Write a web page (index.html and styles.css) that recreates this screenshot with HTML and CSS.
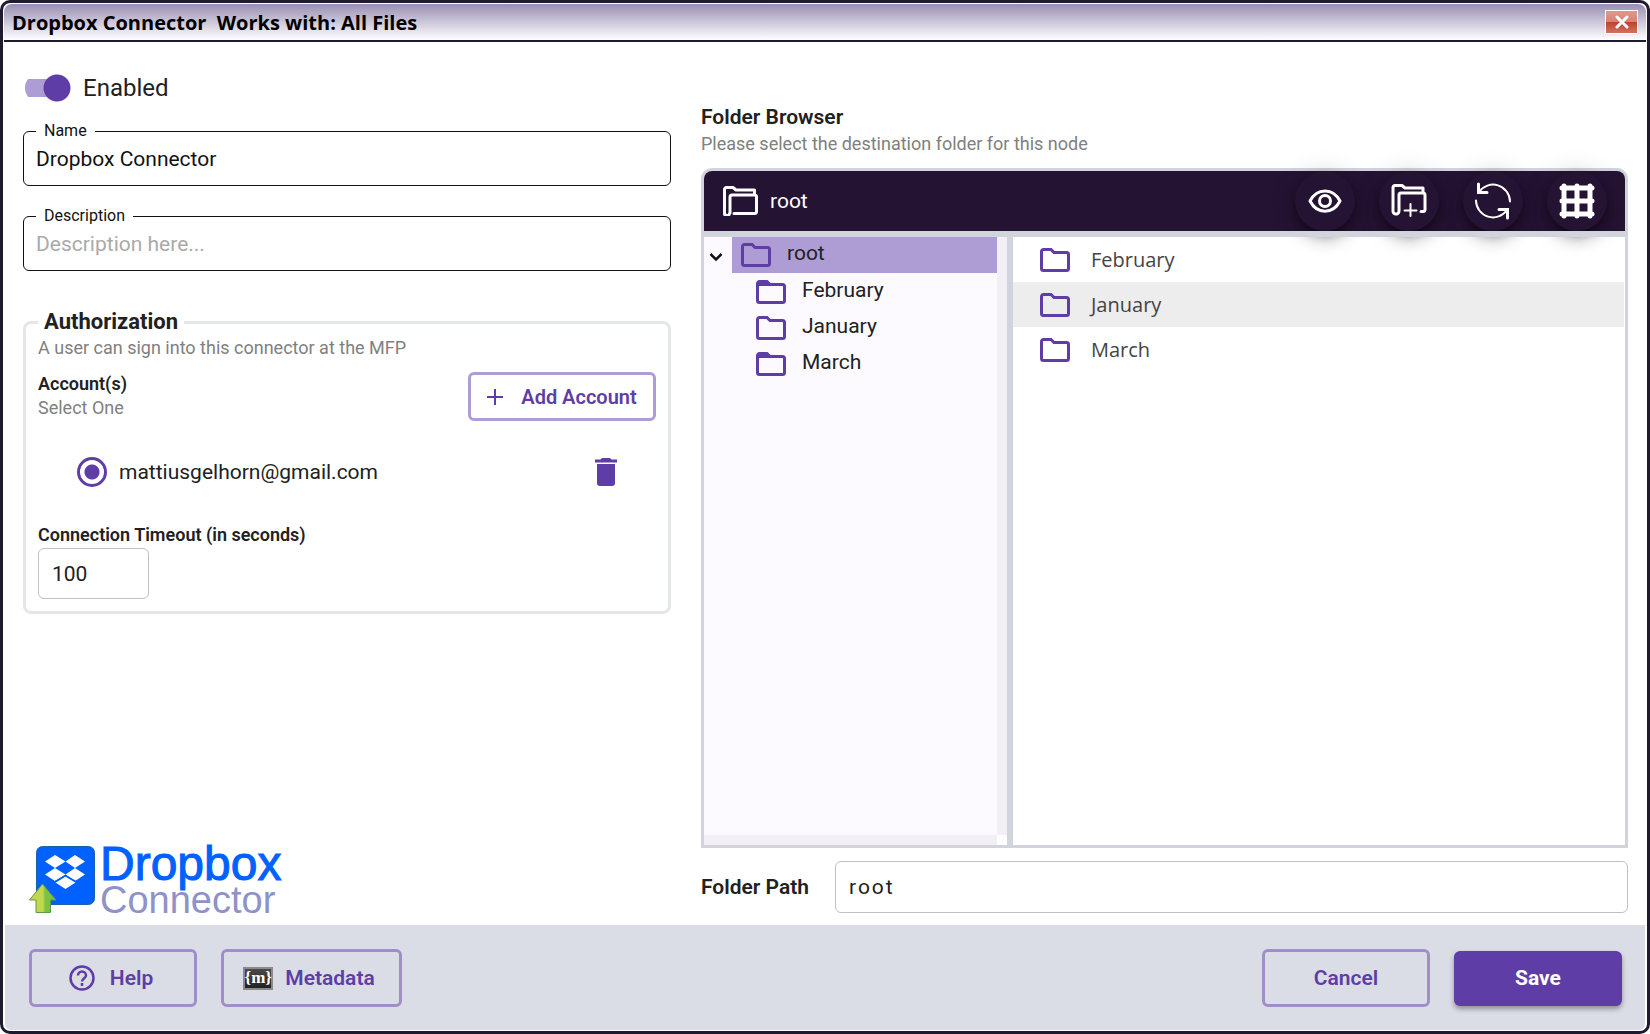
FILE: index.html
```html
<!DOCTYPE html>
<html lang="en">
<head>
<meta charset="utf-8">
<title>Dropbox Connector</title>
<link rel="stylesheet" href="styles.css">
</head>
<body>
<svg class="sprite" aria-hidden="true">
  <symbol id="folder" viewBox="0 0 30 24"><path d="M1.500 20.500V3.500a2 2 0 0 1 2-2h7.500l3 3h12.500a2 2 0 0 1 2 2v14a2 2 0 0 1-2 2h-23a2 2 0 0 1-2-2z" fill="none" stroke="currentColor" stroke-width="3"/></symbol>
  <symbol id="folder-tab" viewBox="0 0 30 24"><path d="M1.500 20.500V3.500a2 2 0 0 1 2-2h7.500l3 3h12.500a2 2 0 0 1 2 2v14a2 2 0 0 1-2 2h-23a2 2 0 0 1-2-2z" fill="none" stroke="currentColor" stroke-width="3"/><path d="M2 1h10l3 5H2z" fill="currentColor"/></symbol>
</svg>
<main class="window">
  <header class="titlebar">
    <h1>Dropbox Connector&nbsp; Works with: All Files</h1>
    <button class="close" type="button" aria-label="Close"><svg width="14" height="14" viewBox="0 0 14 14"><path d="M2 2l10 10M12 2L2 12" stroke="#fff" stroke-width="3" stroke-linecap="round"/></svg></button>
  </header>
  <form class="content">
    <section class="settings">
      <label class="switch"><input type="checkbox" role="switch" checked>Enabled</label>
      <fieldset class="outlined">
        <legend><label for="name">Name</label></legend>
        <input id="name" type="text" value="Dropbox Connector">
      </fieldset>
      <fieldset class="outlined">
        <legend><label for="description">Description</label></legend>
        <input id="description" type="text" placeholder="Description here...">
      </fieldset>
      <fieldset class="auth">
        <legend>Authorization</legend>
        <p class="hint">A user can sign into this connector at the MFP</p>
        <div class="accounts">
          <div>
            <h3>Account(s)</h3>
            <p class="hint">Select One</p>
          </div>
          <button class="button add" type="button"><svg width="16" height="16" viewBox="0 0 16 16"><path d="M8 0v16M0 8h16" stroke="currentColor" stroke-width="2"/></svg>Add Account</button>
        </div>
        <div class="account">
          <label><input type="radio" name="account" checked>mattiusgelhorn@gmail.com</label>
          <button class="trash" type="button" aria-label="Delete account"><svg width="22" height="28" viewBox="0 0 22 28"><path d="M0 1.500h5.500L7 0h8l1.500 1.500H22v3H0zM2 6h18v19a3 3 0 0 1-3 3H5a3 3 0 0 1-3-3z" fill="currentColor"/></svg></button>
        </div>
        <div class="timeout">
          <label for="timeout">Connection Timeout (in seconds)</label>
          <input class="box" id="timeout" type="text" value="100">
        </div>
      </fieldset>
      <div class="logo">
        <svg width="70" height="70" viewBox="0 0 70 70" aria-hidden="true">
          <defs><linearGradient id="leaf"><stop offset="0.500" stop-color="#c0d84e"/><stop offset="0.600" stop-color="#7cc142"/></linearGradient></defs>
          <rect x="8.500" y="2.500" width="58" height="58" rx="6" fill="#0061ff" stroke="#1b62a8"/>
          <path d="M27 11l10.500 6.500L27 24l-10-6.500zM47 11l10 6.500-10 6.500-9.500-6.500zM27 24l10.500 6.500L27 37l-10-6.500zM47 24l10 6.500-10 6.500-9.500-6.500zM37.500 32.500l10 6-10 6.500-10-6.500z" fill="#fff"/>
          <path d="M27.500 37.500l10-6 10 6" fill="none" stroke="#0061ff" stroke-width="1.500"/>
          <path d="M14.500 40L28 56h-5.500v12.500H8V56H1.500z" fill="url(#leaf)" stroke="#5c9a48"/>
        </svg>
        <div class="wordmark"><span>Dropbox</span><span>Connector</span></div>
      </div>
    </section>
    <section class="folders">
      <h2>Folder Browser</h2>
      <p class="hint">Please select the destination folder for this node</p>
      <div class="browser">
        <div class="toolbar">
          <svg width="35" height="30" viewBox="0 0 35 30" fill="none" stroke="#fff" stroke-width="3" stroke-linejoin="round"><path d="M6.500 27.500a2 2 0 0 1-5-1V3.500a2 2 0 0 1 2-2H10l3 2.500h18.500V8M7 27V11a2 2 0 0 1 2-2h22.500a2 2 0 0 1 2 2v14.500a2 2 0 0 1-2 2H11" stroke-linecap="round"/></svg>
          <span class="current">root</span>
          <div class="tools">
            <button type="button" aria-label="Preview"><svg width="34" height="24" viewBox="0 0 34 24" fill="none" stroke="#fff" stroke-width="3"><path d="M2 12C9-1.500 25-1.500 32 12 25 25.500 9 25.500 2 12z" stroke-linejoin="round"/><circle cx="17" cy="12" r="5.500"/></svg></button>
            <button type="button" aria-label="New folder"><svg width="36" height="36" viewBox="0 0 36 36" fill="none" stroke="#fff" stroke-width="3" stroke-linecap="round" stroke-linejoin="round"><path d="M8 28.500a2 2 0 0 1-6-1V4.500a2 2 0 0 1 2-2h7l3 2.500h18V9M8 28V12a2 2 0 0 1 2-2h22a2 2 0 0 1 2 2v14.500a2 2 0 0 1-2 2h-2"/><path d="M19.500 21v12M13.500 27.500h12" stroke-width="2"/></svg></button>
            <button type="button" aria-label="Refresh"><svg width="38" height="38" viewBox="0 0 38 38" fill="none" stroke="#fff" stroke-width="2" stroke-linecap="round"><path d="M5 10A17 17 0 0 1 36 19.500M33 28A17 17 0 0 1 2 18.500"/><path d="M4.500 2v8.500H13M33.500 36v-8.500H25" stroke-width="3"/></svg></button>
            <button type="button" aria-label="Grid view"><svg width="36" height="36" viewBox="0 0 36 36" stroke="#fff" stroke-width="5" stroke-linecap="round"><path d="M5 3v30M18 3v30M31 3v30M3 5h30M3 18h30M3 31h30"/></svg></button>
          </div>
        </div>
        <div class="panes">
          <div class="tree-pane">
            <div class="tree">
              <div class="tree-root">
                <button type="button" aria-label="Collapse root"><svg width="14" height="10" viewBox="0 0 14 10"><path d="M1.500 2L7 7.500 12.500 2" fill="none" stroke="#111" stroke-width="2.500"/></svg></button>
                <a href="#root" class="selected"><svg class="folder"><use href="#folder"/></svg><span>root</span></a>
              </div>
              <a href="#february"><svg class="folder"><use href="#folder-tab"/></svg><span>February</span></a>
              <a href="#january"><svg class="folder"><use href="#folder"/></svg><span>January</span></a>
              <a href="#march"><svg class="folder"><use href="#folder-tab"/></svg><span>March</span></a>
            </div>
            <div class="scroll-y"></div>
            <div class="scroll-x"></div>
          </div>
          <div class="list">
            <a href="#list-february"><svg class="folder"><use href="#folder"/></svg>February</a>
            <a href="#list-january" class="active"><svg class="folder"><use href="#folder"/></svg>January</a>
            <a href="#list-march"><svg class="folder"><use href="#folder"/></svg>March</a>
          </div>
        </div>
      </div>
      <div class="path">
        <label for="path">Folder Path</label>
        <input class="box" id="path" type="text" value="root">
      </div>
    </section>
  </form>
  <footer>
    <button class="button help" type="button"><svg width="26" height="26" viewBox="0 0 26 26" fill="none" stroke="currentColor" stroke-width="2.500"><circle cx="13" cy="13" r="11.500"/><path d="M9 10.500a4 4 0 1 1 8 0c0 2.500-4 3-4 6"/><path d="M13 18v3"/></svg>Help</button>
    <button class="button meta" type="button"><span class="badge">{m}</span>Metadata</button>
    <button class="button cancel" type="button">Cancel</button>
    <button class="button save" type="submit">Save</button>
  </footer>
</main>
</body>
</html>
```
FILE: styles.css
```css
* { box-sizing: border-box; }
html, body { height: 100%; }
body { margin: 0; background: #fff; color: #212121; font: 21px/24px Roboto, sans-serif; }
h1, h2, h3, p { margin: 0; }
button, input { font: inherit; color: inherit; }
button { cursor: pointer; }
a { color: inherit; text-decoration: none; }
.sprite { display: none; }

.window { display: flex; flex-direction: column; min-height: 100%; border: 3px solid #1f1a2e; border-radius: 10px; padding: 1px; background: #fff; overflow: hidden; }
.titlebar { display: flex; align-items: center; justify-content: space-between; height: 38px; padding: 0 8px; border-bottom: 2px solid #1f1a2e; border-radius: 8px 8px 0 0; background: linear-gradient(#998eb3, #fff); }
h1 { padding-top: 2px; color: #000; font: bold 20px/28px "Open Sans", sans-serif; }
.close { display: grid; place-items: center; width: 33px; height: 24px; padding: 0; border: 1px solid #fff; background: linear-gradient(#e09488 0 10%, #d98074 50%, #c0402c 50%, #cf7360); }

.content { flex: 1; display: grid; grid-template-columns: 648fr 927fr; gap: 30px; padding: 0 18px 12px 19px; }
.settings { display: flex; flex-direction: column; }
.switch { display: flex; align-items: center; gap: 12px; height: 28px; margin-top: 32px; padding-left: 2px; font-size: 24px; line-height: 28px; }
.switch input { appearance: none; width: 46px; height: 28px; margin: 0; background: radial-gradient(circle at 32px 14px, #5f3da6 13px, transparent 14px), linear-gradient(#ae9dd4, #ae9dd4) 0 5px / 36px 18px no-repeat; border-radius: 14px; }
.outlined { height: 64px; min-width: 0; margin: 20px 0 0; padding: 0 12px; border: 1px solid #111; border-radius: 6px; color: #111; }
.outlined + .outlined { margin-top: 21px; }
.outlined legend { padding: 0 8px; font-size: 16px; line-height: 18px; }
.outlined input { display: block; width: 100%; height: 38px; padding: 0; border: 0; background: none; outline: 0; }
.outlined input::placeholder { color: #aaa; opacity: 1; }
.auth { min-width: 0; margin: 39px 0 0; padding: 0 12px 12px; border: 3px solid #e5e6ea; border-radius: 8px; }
.auth legend { padding: 0 6px; font-size: 22px; font-weight: 700; line-height: 24px; }
.hint { color: #808080; font-size: 18px; line-height: 24px; }
.auth legend + .hint { margin-top: 2px; }
h3, .timeout label { font-size: 18px; font-weight: 600; line-height: 24px; }
.accounts { display: flex; justify-content: space-between; margin-top: 12px; }
.button { display: flex; align-items: center; justify-content: center; gap: 15px; border: 3px solid #9f8ec8; border-radius: 6px; background: none; color: #5f3da6; font-weight: 600; }
.button.add { gap: 18px; min-width: 188px; height: 49px; padding: 0 14px; border-color: #ae9dd4; font-size: 20px; }
.account { display: flex; align-items: center; justify-content: space-between; height: 48px; margin-top: 27px; padding: 0 39px; }
.account label { display: flex; align-items: center; gap: 12px; }
.account input { appearance: none; width: 30px; height: 30px; margin: 0; border: 3px solid #5f3da6; border-radius: 50%; background: radial-gradient(circle, #5f3da6 7px, transparent 8px); }
.trash { display: flex; padding: 0; border: 0; background: none; color: #5f3da6; }
.timeout { display: grid; justify-items: start; gap: 1px; margin-top: 27px; }
.box { height: 52px; min-width: 0; padding: 0 13px; border: 1px solid #c0c0c4; border-radius: 6px; background: #fff; }
.timeout .box { width: 111px; height: 51px; }
.logo { display: flex; gap: 2px; margin-top: auto; padding-left: 5px; margin-bottom: -4px; }
.wordmark { display: flex; flex-direction: column; font-family: "Liberation Sans", Arial, sans-serif; color: #8e92c8; font-size: 38px; line-height: 33px; }
.wordmark span:first-child { color: #0061ff; font-size: 48px; line-height: 40px; -webkit-text-stroke: 1px #0061ff; }

.folders { display: flex; flex-direction: column; padding-top: 62px; }
h2 { margin-bottom: 2px; font-size: 21px; font-weight: 600; line-height: 26px; }
.browser { flex: 1; display: flex; flex-direction: column; margin-top: 12px; border: 3px solid #d1d4dc; border-radius: 11px 11px 0 0; }
.toolbar { display: flex; align-items: center; gap: 12px; height: 60px; padding: 0 18px 0 19px; border-radius: 8px 8px 0 0; background: #251333; color: #fff; }
.tools { display: flex; gap: 24px; margin-left: auto; }
.tools button { display: grid; place-items: center; width: 60px; height: 60px; padding: 0; border: 0; border-radius: 50%; background: #251333; box-shadow: 0 5px 8px -2px rgba(0,0,0,.4), 0 9px 15px rgba(0,0,0,.2), 0 2px 27px rgba(0,0,0,.16); }
.panes { flex: 1; display: flex; border-top: 6px solid #d1d4dc; }
.tree-pane { flex: 0 0 309px; display: grid; grid-template: 1fr 10px / 1fr 10px; border-right: 6px solid #d1d4dc; }
.tree { background: #fcfaff; }
.tree a { display: flex; align-items: center; gap: 16px; height: 36px; padding-left: 52px; }
.tree a span { padding-bottom: 4px; }
.tree-root { display: flex; margin-bottom: 1px; }
.tree-root button { width: 28px; padding: 0 5px 0 0; border: 0; background: none; }
.tree .tree-root a { flex: 1; padding-left: 9px; background: #ae9dd4; }
.folder { width: 30px; height: 24px; color: #5f3da6; }
.scroll-y, .scroll-x { background: #f2f0f5; }
.list { flex: 1; color: #444; font: 20px/28px "Open Sans", sans-serif; }
.list a { display: flex; align-items: center; gap: 21px; height: 45px; margin-right: 1px; padding-left: 27px; }
.list .active { background: #ededed; }
.path { display: flex; align-items: center; gap: 26px; margin-top: 13px; }
.path label { font-weight: 600; }
.path .box { flex: 1; letter-spacing: 2px; }

footer { display: flex; align-items: center; gap: 24px; padding: 24px 23px 23px 24px; margin: 0 1px; border-radius: 0 0 6px 6px; background: #dadde6; }
footer .button { height: 58px; padding: 0; }
footer .help { width: 168px; padding-right: 4px; }
footer .meta { width: 181px; gap: 12px; padding-right: 5px; }
footer .cancel { width: 168px; margin-left: auto; }
footer .save { width: 168px; height: 55px; border: 0; background: #5f3da6; color: #fff; font-weight: 700; box-shadow: 0 3px 5px rgba(0,0,0,.35); }
.badge { display: flex; justify-content: center; width: 30px; height: 23px; border: 2px solid #8a8a8a; background: linear-gradient(#4a4a4a, #222); color: #fff; font: bold 17px/17px "Liberation Serif", serif; }
```
